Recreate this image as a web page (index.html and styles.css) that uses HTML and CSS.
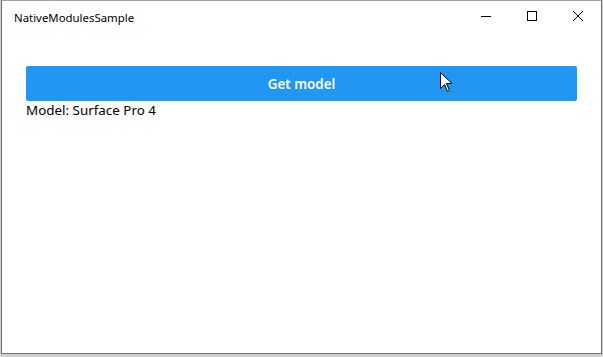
FILE: index.html
```html
<!DOCTYPE html>
<html lang="en">
<head>
    <meta charset="UTF-8">
    <meta name="viewport" content="width=device-width, initial-scale=1.0">
    <title>NativeModulesSample</title>
    <link rel="stylesheet" href="styles.css">
</head>
<body>
    <div class="window">
        <header class="titlebar">
            <span class="title">NativeModulesSample</span>
            <div class="controls">
                <span class="ctl">
                    <svg width="10" height="10" viewBox="0 0 10 10"><path d="M0 5.5H10" stroke="#000" stroke-width="1"/></svg>
                </span>
                <span class="ctl">
                    <svg width="10" height="10" viewBox="0 0 10 10"><rect x="0.5" y="0.5" width="9" height="9" fill="none" stroke="#000" stroke-width="1"/></svg>
                </span>
                <span class="ctl">
                    <svg width="10" height="10" viewBox="0 0 10 10"><path d="M0 0L10 10M10 0L0 10" stroke="#000" stroke-width="1"/></svg>
                </span>
            </div>
        </header>

        <main class="content">
            <button type="button" class="btn">Get model</button>
            <p class="result">Model: Surface Pro 4</p>
        </main>

        <!-- mouse pointer hovering the button -->
        <svg class="cursor" width="13" height="20" viewBox="0 0 13 20">
            <path d="M0.5 0.5V16.5L4.5 12.5L7.5 19.5L9.5 18.5L6.5 11.5H12L0.5 0.5Z" fill="#fff" stroke="#000" stroke-width="1"/>
        </svg>
    </div>
</body>
</html>
```

FILE: styles.css
```css
* {
  margin: 0;
  padding: 0;
  box-sizing: border-box;
}

body {
  font-family: "Noto Sans", "Open Sans", sans-serif;
  background-color: #cfcfcf;
  width: 603px;
  height: 357px;
  padding: 0 1px 3px 1px;
}

.window {
  position: relative;
  width: 601px;
  height: 354px;
  background-color: #fff;
  border: 1px solid #707070;
  border-top-color: #a0a0a0;
  display: flex;
  flex-direction: column;
}

.titlebar {
  height: 31px;
  display: flex;
  align-items: center;
  justify-content: space-between;
}

.title {
  font-size: 11.4px;
  color: #000;
  padding-left: 12px;
  padding-top: 2px;
}

.controls {
  display: flex;
  height: 100%;
}

.ctl {
  width: 46px;
  display: flex;
  align-items: center;
  justify-content: center;
  padding-bottom: 2px;
}

.content {
  padding: 34px 24px 0 24px;
}

.btn {
  display: block;
  width: 100%;
  height: 35px;
  background-color: #2196f3;
  color: #fff;
  border: none;
  border-radius: 2px;
  font-family: inherit;
  font-size: 13.4px;
  font-weight: 600;
}

.result {
  font-size: 13.4px;
  color: #000;
  line-height: 19px;
}

.cursor {
  position: absolute;
  left: 438px;
  top: 71px;
}
```
